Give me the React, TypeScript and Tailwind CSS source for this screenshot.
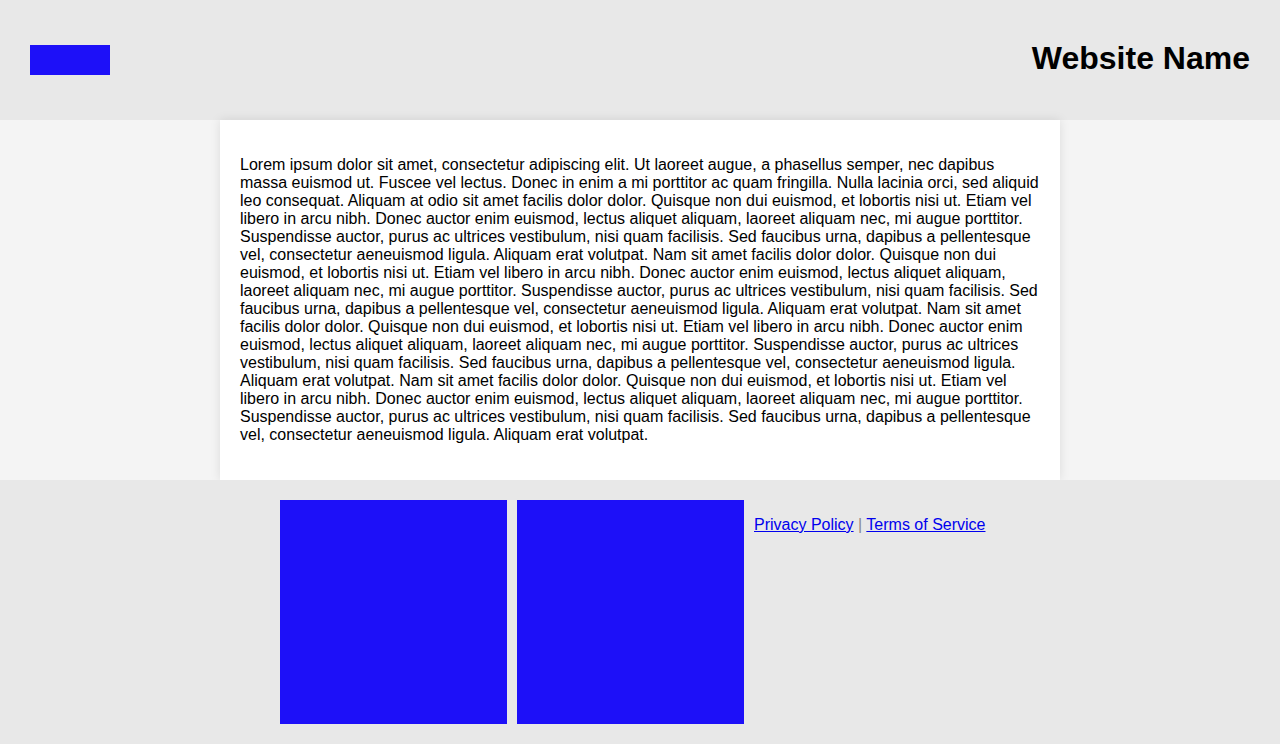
const intro =
  'Lorem ipsum dolor sit amet, consectetur adipiscing elit. Ut laoreet augue, a phasellus semper, nec dapibus massa euismod ut. Fuscee vel lectus. Donec in enim a mi porttitor ac quam fringilla. Nulla lacinia orci, sed aliquid leo consequat. Aliquam at odio sit amet facilis dolor dolor. Quisque non dui euismod, et lobortis nisi ut. Etiam vel libero in arcu nibh.';
const blockB =
  'Donec auctor enim euismod, lectus aliquet aliquam, laoreet aliquam nec, mi augue porttitor. Suspendisse auctor, purus ac ultrices vestibulum, nisi quam facilisis. Sed faucibus urna, dapibus a pellentesque vel, consectetur aeneuismod ligula. Aliquam erat volutpat.';
const blockC =
  'Nam sit amet facilis dolor dolor. Quisque non dui euismod, et lobortis nisi ut. Etiam vel libero in arcu nibh.';

const bodyText = [intro, blockB, blockC, blockB, blockC, blockB, blockC, blockB].join(' ');

const App = () => {
  return (
    <div className="w-full min-h-[744px] flex flex-col font-['Liberation_Sans',Arial,sans-serif] text-black">
      <header className="w-full h-[120px] bg-[#e8e8e8] flex items-center justify-between px-[30px]">
        <div className="w-[80px] h-[30px] bg-[#1d10f8]" />
        <h1 className="text-[32px] font-bold leading-[36px] mb-1">Website Name</h1>
      </header>
      <main className="w-full bg-[#f4f4f4] flex justify-center">
        <article className="w-[840px] bg-white p-[20px] shadow-[0_0_10px_rgba(0,0,0,0.1)]">
          <p className="my-4 text-[16px] leading-[18px]">{bodyText}</p>
        </article>
      </main>
      <footer className="w-full flex-1 bg-[#e8e8e8] py-[20px]">
        <div className="w-[720px] mx-auto flex gap-[10px] items-start">
          <div className="w-[227px] h-[224px] bg-[#1d10f8]" />
          <div className="w-[227px] h-[224px] bg-[#1d10f8]" />
          <p className="my-4 text-[16px] leading-[18px] text-[#888]">
            <a href="#" className="text-[#0000ee] underline">
              Privacy Policy
            </a>{' '}
            |{' '}
            <a href="#" className="text-[#0000ee] underline">
              Terms of Service
            </a>
          </p>
        </div>
      </footer>
    </div>
  );
};

export default App;
